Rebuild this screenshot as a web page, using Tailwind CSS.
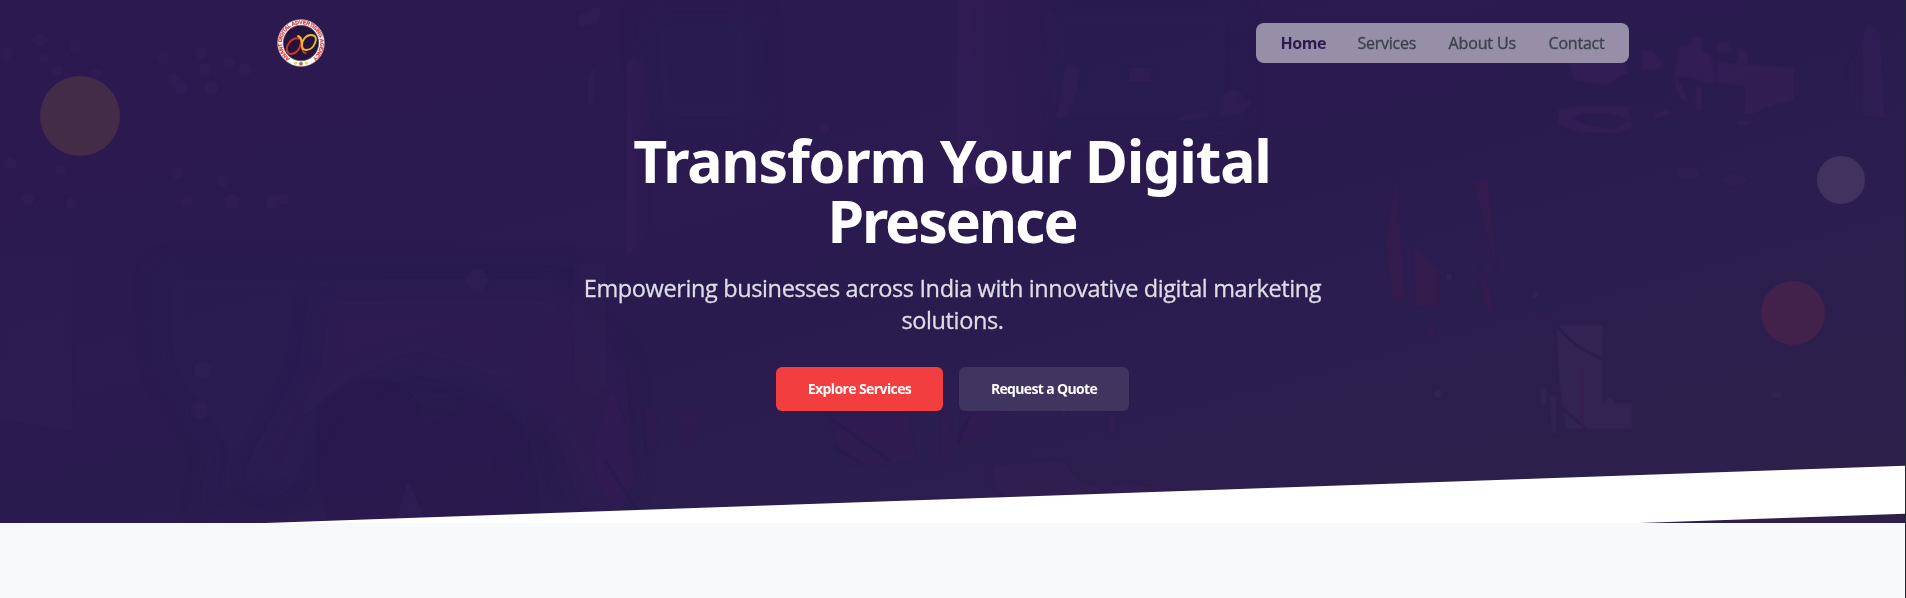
<!DOCTYPE html>
<html lang="en">
<head>
<meta charset="utf-8">
<title>Anant Digital Advertising Agency</title>
<script src="https://cdn.jsdelivr.net/npm/@tailwindcss/browser@4"></script>
</head>
<body class="min-h-screen overflow-hidden bg-[#f8f9fb] font-['Open_Sans',sans-serif]">
<div class="flex h-[598px]">
  <main class="min-w-0 flex-1">
    <section class="relative h-[523px] overflow-hidden bg-linear-to-br from-[#2c194f] via-[#2a1b4f] to-[#2d214b]">
      <!-- faint office scene behind the hero -->
      <svg class="absolute inset-0 opacity-70" width="1905" height="523" viewBox="0 0 1905 523" aria-hidden="true">
        <defs>
          <linearGradient id="fr" x1="0" x2="1"><stop offset="0" stop-color="#391f5a" stop-opacity=".65"/><stop offset="1" stop-color="#391f5a" stop-opacity="0"/></linearGradient>
          <linearGradient id="fl" x1="1" x2="0"><stop offset="0" stop-color="#391f5a" stop-opacity=".8"/><stop offset="1" stop-color="#2b2558" stop-opacity="0"/></linearGradient>
          <filter id="s1"><feGaussianBlur stdDeviation="1.200"/></filter>
          <filter id="s8" x="-20%" y="-20%" width="140%" height="140%"><feGaussianBlur stdDeviation="12"/></filter>
        </defs>
        <g filter="url(#s8)" fill="#272055" opacity=".4">
          <path d="M155 265h415v60l-50 15 20 180h-50L520 420 500 385 440 395 370 380 330 410 310 485 200 515 215 450 160 370z"/>
          <path d="M640 10h120v120H650zM1040 0h200v130h-190z"/>
        </g>
        <g filter="url(#s8)" fill="#351d57" opacity=".45">
          <path d="M320 290h240l65 70 10 130-50 30-30-90-80-50-60-20-60 30-50 40-25 60-30-10 60-110z"/>
        </g>
        <g fill="#2c184d" filter="url(#s1)" opacity=".6"><path d="M318 480V410q20-30 60-32 40 10 46 50 30-20 70-25 30 20 40 60l6 60H330z"/></g>
        <g filter="url(#s1)" fill="#35205a" opacity=".6">
          <path d="M0 257h72v175L0 420zM574 263v120l20 14 12-10V263z" opacity=".4"/>
          <g><circle cx="40" cy="40" r="7"/><circle cx="75" cy="46" r="7"/><circle cx="44" cy="58" r="6"/><circle cx="6" cy="54" r="7"/><circle cx="57" cy="71" r="6"/><circle cx="96" cy="74" r="6"/><circle cx="163" cy="58" r="7"/><circle cx="201" cy="53" r="7"/><circle cx="229" cy="63" r="7"/><circle cx="245" cy="70" r="7"/><circle cx="205" cy="70" r="7"/><circle cx="174" cy="80" r="7"/><circle cx="181" cy="88" r="7"/><circle cx="211" cy="88" r="8"/><circle cx="10" cy="163" r="7"/><circle cx="61" cy="170" r="6"/><circle cx="177" cy="173" r="7"/><circle cx="223" cy="181" r="7"/><circle cx="187" cy="202" r="7"/><circle cx="232" cy="202" r="8"/><circle cx="273" cy="202" r="8"/><circle cx="284" cy="199" r="6"/><circle cx="71" cy="203" r="6"/><circle cx="28" cy="199" r="7"/><circle cx="477" cy="280" r="11"/><circle cx="203" cy="370" r="9"/><circle cx="200" cy="410" r="9"/></g>
          <path d="M396 522l12-42 18 42zM578 15l24-10-3 18-20 5zM588 75l8-10-2 35-6 10z"/>
        </g>
        <path fill="url(#fr)" d="M627 62l8-6 14 14 4 50-2 110-24 27z"/>
        <path fill="url(#fr)" d="M957 0h90l30 60-14 55-40 65-66 10z"/>
        <g filter="url(#s1)" fill="#3a2059" opacity=".55">
          <path d="M1066 65l14 2-2 20-10 30h-12zM1129 68h22v14h-22zM1178 117l30-7v9l-30 2zM1219 97l16-8 18 14-10 10-24 4z"/>
          <circle cx="824" cy="129" r="6"/>
          <path d="M612 388l14 40 8 50-16 40-18-30-8-40zM677 409h22l-7 38h-8zM645 405l12 5-2 40-8-2zM826 414h82l8 46-44 6h-26zM940 412h12v48h-10zM960 412h40l-12 20-28 14z" opacity=".7"/>
          <path d="M994 465l70-4 14 20 30 10-100 8-16-14zM1106 487l18-4 48 7-65 10z"/>
          <path d="M1108 413h8l-1 20h-5zM1059 408q6-4 8 2l-4 9z"/>
        </g>
        <g stroke="#271a4e" stroke-width="3" fill="none"><path d="M830 418l60 43M834 447l30 18M605 460l32 50M970 415l-12 28"/></g>
        <g filter="url(#s1)" fill="#3d235b" opacity=".65">
          <!-- tables and seated group, upper right -->
          <path d="M1566 57h60l2 16-22 12-32-5zM1642 50h10l12 15-8 5h-14zM1692 37h10v12l10 8 4 25-8 2-16-6-18-2 4-28 14-4zM1675 75l10 16 3 12-7-3-6-14zM1695 87h7v24h-6zM1717 62l77 6v32l-30 9-10 5h-9V86l-28-4zM1738 45l10 8v10h-11zM1717 43l12-3 2 12-13 2z"/>
          <path fill-rule="evenodd" d="M1558 109l20-3h50l4 22-15 5h-35l-24-8zm15 9 16 8 25 4 14-10-20-7h-25z"/>
          <path d="M1655 113l12-4 6 5-20 6zM1738 121h11v4h-11z"/>
          <g opacity=".6"><ellipse cx="1688" cy="173" rx="13" ry="6"/><ellipse cx="1734" cy="180" rx="13" ry="6"/></g>
        </g>
        <path fill="url(#fl)" d="M1867 23l12 8 6 88-32-6-8-45 15-20z" filter="url(#s1)"/>
        <g filter="url(#s1)" fill="#4a1c50" opacity=".4">
          <path d="M1396 180l4 30 5 90h-12l-8-60zM1411 200l18 15-8-2zM1413 245l26 25v35l-24 2zM1472 180l16 0 6 60 4 36-12-45zM1478 263l12 28 4 18h-8l-6-24z"/>
          <circle cx="1431" cy="331" r="4"/><circle cx="1544" cy="316" r="3"/>
        </g>
        <g filter="url(#s1)" fill="#3b2a5a" opacity=".7">
          <path d="M1556 325h47v78h29v26h-66l-6-40zM1540 388h6v17h-5zM1550 395h6v40l-4-4z"/>
          <rect x="1771" y="392" width="11" height="6" rx="2"/><ellipse cx="1438" cy="394" rx="3.500" ry="4.500"/><circle cx="1610" cy="402" r="4.500"/><circle cx="1535" cy="295" r="3"/><circle cx="1449" cy="277" r="3.500"/>
        </g>
        <path d="M1557 325q15 22 46 34M1562 408l24 21" stroke="#2a1b4a" stroke-width="3" fill="none" opacity=".7"/>
        <path d="M1582 370v58" stroke="#40204f" stroke-width="4" fill="none" opacity=".6"/>
      </svg>

      <!-- floating accents -->
      <div class="absolute top-[76px] left-10 size-20 rounded-full bg-[#422c48]"></div>
      <div class="absolute top-[156px] right-10 size-12 rounded-full bg-[#41325f]"></div>
      <div class="absolute top-[281px] right-20 size-16 rounded-full bg-[#42214b]"></div>
      <div class="absolute inset-x-0 -bottom-6 h-12 -skew-y-2 bg-white"></div>

      <div class="relative">
        <header class="mx-auto flex h-[86px] w-[1352px] items-center justify-between">
          <svg width="48" height="48" viewBox="0 0 48 48" role="img" aria-label="Anant Digital Advertising Agency">
            <defs><path id="ring" d="M12.900 39.600A19.100 19.100 0 1 1 35.100 39.600"/></defs>
            <circle cx="24" cy="24" r="23.500" fill="#fff" stroke="#9b8d7c" stroke-width=".6"/>
            <circle cx="24" cy="24" r="17.800" fill="#24133d" stroke="#6b5f75" stroke-width=".6"/>
            <text font-family="Liberation Sans, sans-serif" font-size="5.400" font-weight="700" fill="#e0343a" stroke="#e0343a" stroke-width=".2"><textPath href="#ring" textLength="95" lengthAdjust="spacing">ANANT DIGITAL ADVERTISING AGENCY</textPath></text>
            <g fill="none" stroke-linecap="round">
              <path d="M25 21C21 18 15 19 12 24c-4 6-2 11 2 11 5 0 9-5 10-11 .5-4 0-6-2-6.500" stroke="#c9352d" stroke-width="1.900"/>
              <path d="M21 17.500c4 0 3 8 4 12 .7 3 2 5 4 4.500" stroke="#d8472c" stroke-width="1.400"/>
              <path d="M25 26c0-5 4-10 9-10 5 0 6 4 4 8-2 5-6 7-9 7-3 0-4-2-4-5 0-4-1-8-4-9" stroke="#eebd20" stroke-width="1.900"/>
            </g>
            <circle cx="18.500" cy="44" r="1.600" fill="#ead94f"/><circle cx="24" cy="44.800" r="2" fill="#a7775e"/><circle cx="29.500" cy="44" r="1.600" fill="#ead94f"/>
          </svg>
          <nav class="flex h-10 items-center gap-8 rounded-lg bg-[#978ea8] pr-[23px] pl-[25px] text-base text-[#3b424d]">
            <a class="w-[45px] whitespace-nowrap font-bold tracking-[-0.45px] text-[#2d1950]">Home</a>
            <a class="w-[59px] whitespace-nowrap tracking-[-0.25px] [-webkit-text-stroke:0.35px]">Services</a>
            <a class="w-[68px] whitespace-nowrap tracking-[-0.12px] [-webkit-text-stroke:0.35px]">About Us</a>
            <a class="w-[57px] whitespace-nowrap tracking-[-0.2px] [-webkit-text-stroke:0.35px]">Contact</a>
          </nav>
        </header>
        <div class="flex flex-col items-center pt-11 text-center">
          <h1 class="flex flex-col items-center font-['Noto_Sans',sans-serif] text-[59px] leading-[60px] font-bold text-white"><span class="-ml-px block tracking-[-1.2px]">Transform Your Digital</span><span class="-ml-px block tracking-[-2.1px]">Presence</span></h1>
          <p class="mt-[22px] text-[23.5px] leading-8 tracking-[-0.375px] text-[#dfdde5] [-webkit-text-stroke:0.3px]">Empowering businesses across India with innovative digital marketing<br>solutions.</p>
          <div class="mt-[31px] flex gap-4 text-sm font-bold text-white">
            <a class="flex h-11 w-[167px] items-center justify-center rounded-md bg-[#f23e3f] tracking-[-0.6px]">Explore Services</a>
            <a class="flex h-11 w-[170px] items-center justify-center rounded-md bg-white/10 tracking-[-0.65px]">Request a Quote</a>
          </div>
        </div>
      </div>
    </section>
  </main>
  <div class="w-px bg-[#24262b]"></div>
</div>
</body>
</html>
